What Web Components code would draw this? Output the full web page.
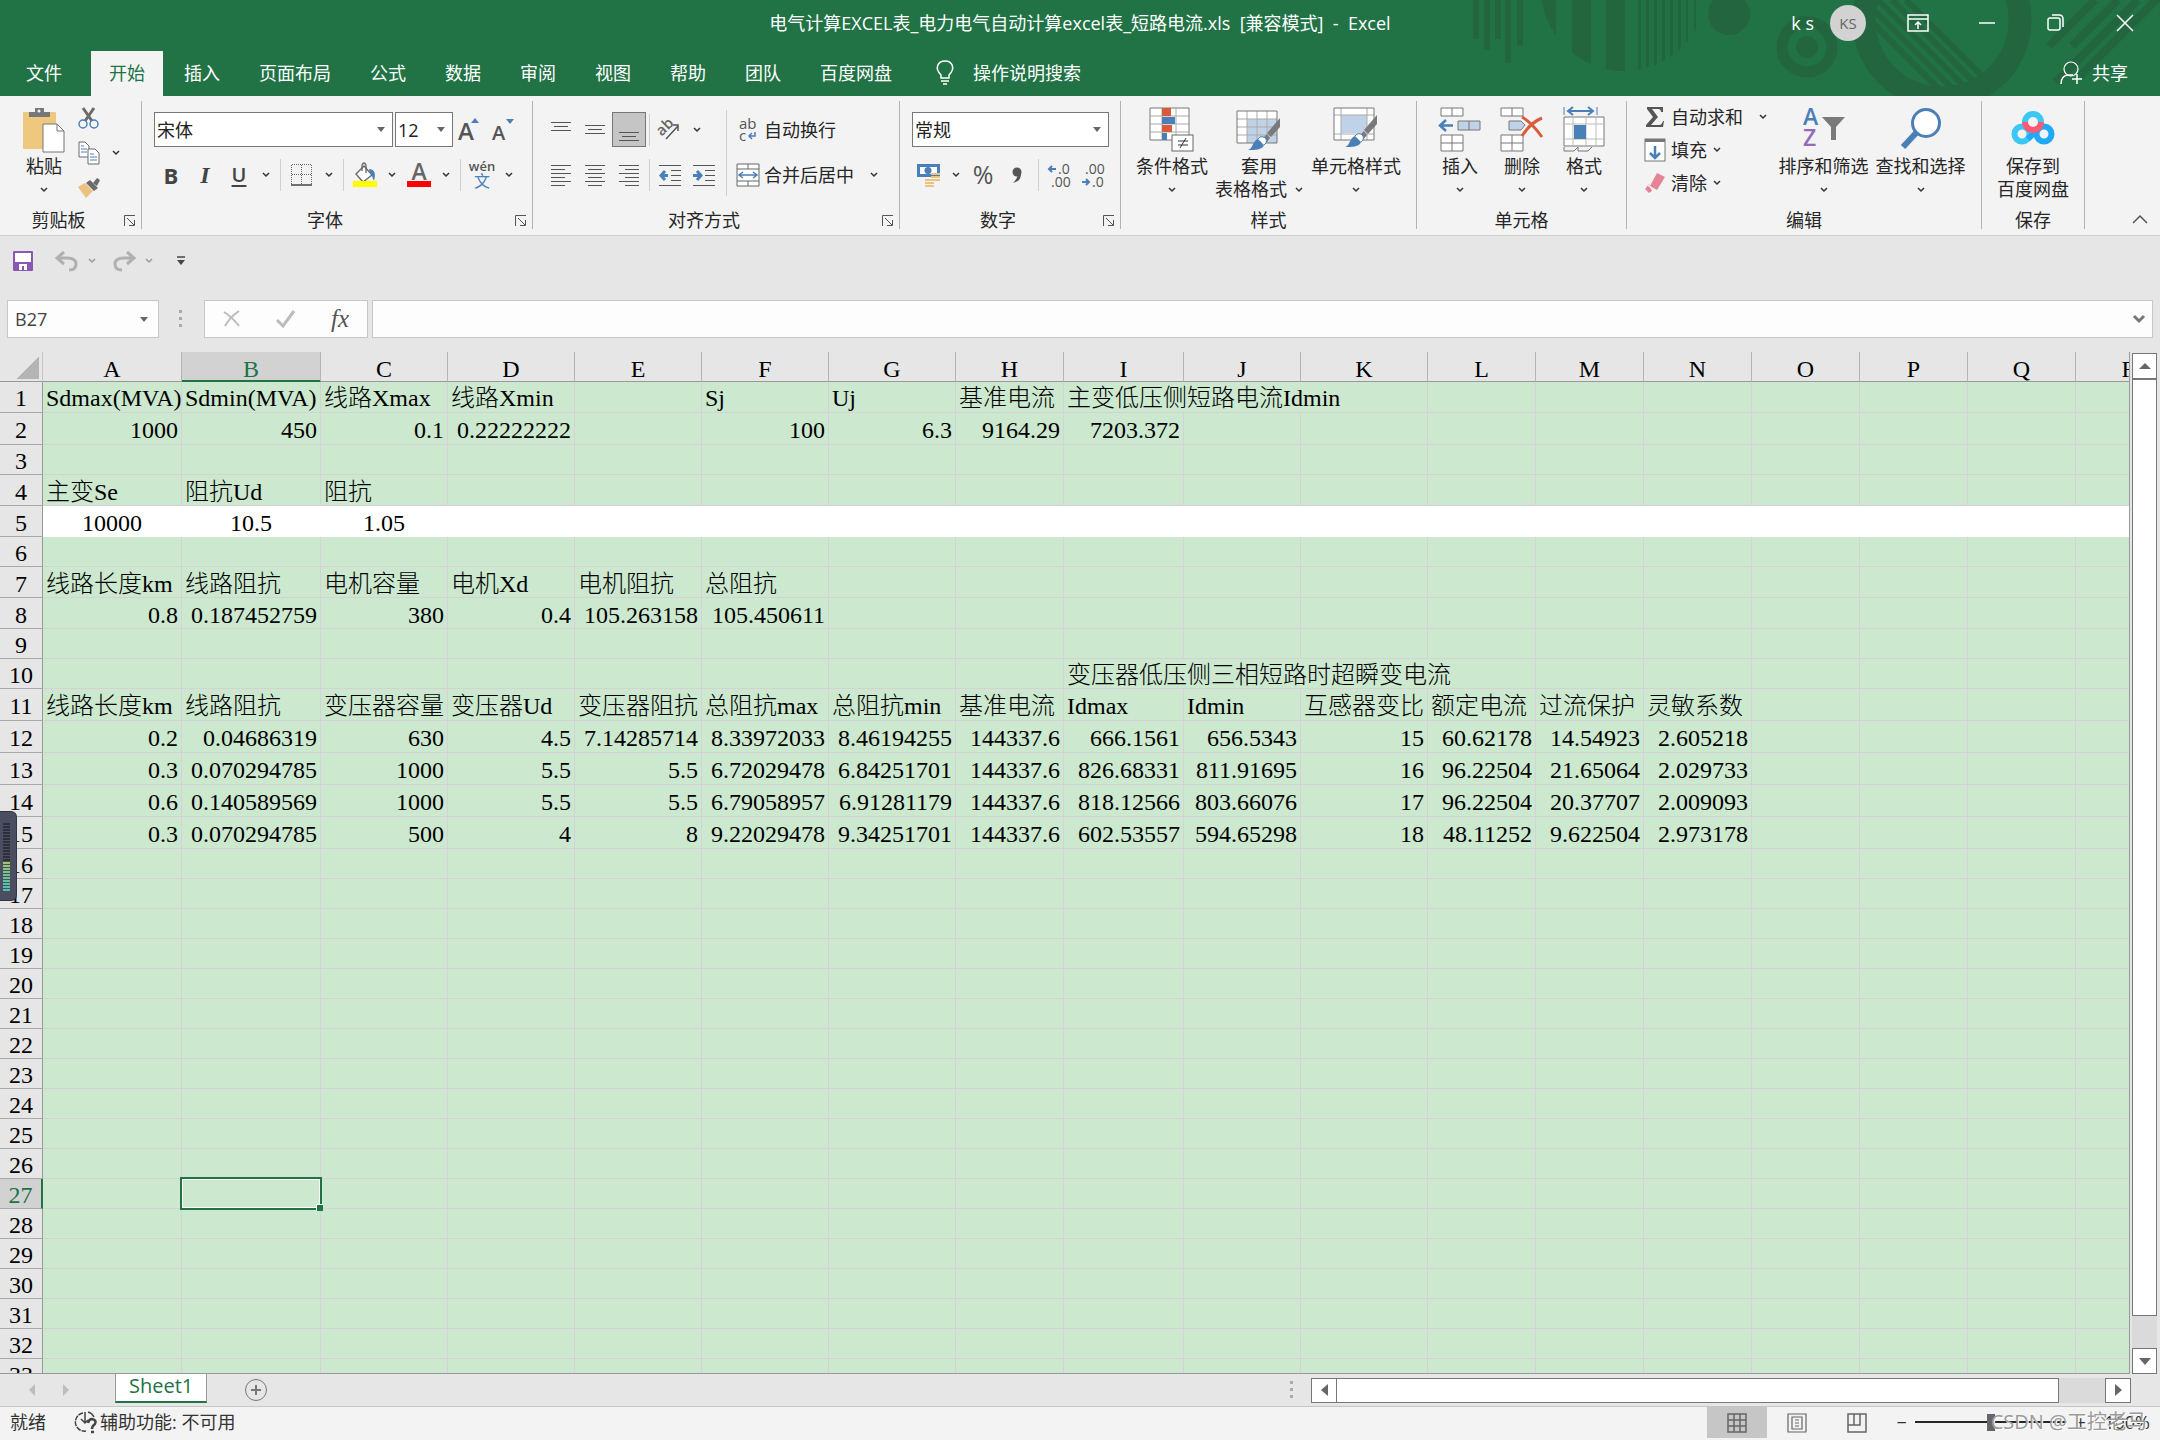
<!DOCTYPE html>
<html lang="zh-CN">
<head>
<meta charset="utf-8">
<title>Excel</title>
<style>
  html, body { height: 100%; margin: 0; }
  body {
    --green: #217346;
    --chrome: #e6e6e6;
    --panel: #f3f3f3;
    --ink: #262626;
    background: var(--chrome);
    color: var(--ink);
    font: 18px/24px "Open Sans", "Noto Sans CJK SC", sans-serif;
    overflow: hidden;
  }
</style>
</head>
<body>
<excel-app></excel-app>

<script>
// Icons: name -> [width, height, svg body]
const BRUSH = `
  <path d="M44 11v9L35 30l-4-4z" fill="#7a7a7a"/><path d="M34 31l-4 5-4-4 5-5z" fill="#7a7a7a"/>
  <path d="M12 43c5-1 5-10 10-11 5 0 7 3 6 6-2 5-9 5-16 5z" fill="#4a7fb8"/>
  <path d="M22 32c2-3 6-3 8 0 1 2 0 5-2 6" fill="#fff" stroke="#4a7fb8"/>`;

const ICONS = {
  chev: [8, 6, '<path d="M1 1l3 3 3-3" fill="none" stroke="#333" stroke-width="1.5"/>'],
  tri: [8, 5, '<path d="M0 0h8L4 5z" fill="#666"/>'],
  launcher: [11, 11, '<path d="M.5 11V.5H11M3 3l7 7M10.500 5v5.500H5" fill="none" stroke="#555"/>'],
  paste: [42, 45, `
    <rect x="0" y="5" width="33" height="37" rx="1" fill="#edc87e"/>
    <path d="M6 10V5h6V1h9v4h6v5z" fill="#777"/><circle cx="16" cy="4" r="1.500" fill="#f3f3f3"/>
    <path d="M20 17h14l7 7v21H20z" fill="#fff" stroke="#777"/><path d="M34 17v7h7" fill="none" stroke="#777"/>`],
  cut: [22, 22, `
    <path d="M5 1l9 13M16 1L7 14" stroke="#6b6b6b" stroke-width="3" fill="none"/>
    <circle cx="5" cy="17" r="4" fill="none" stroke="#4a7fb8" stroke-width="1.500"/>
    <circle cx="16" cy="17" r="4" fill="none" stroke="#4a7fb8" stroke-width="1.500"/>`],
  copy: [22, 24, `
    <path d="M1 1h6l4 4v11H1z" fill="#fff" stroke="#6b6b6b"/><path d="M3 5h3M3 8h6M3 11h6" stroke="#4a7fb8"/>
    <path d="M10 8h7l4 4v11H10z" fill="#fff" stroke="#6b6b6b"/><path d="M12 13h4M12 16h7M12 19h7" stroke="#4a7fb8"/>`],
  painter: [24, 22, `
    <path d="M1 10l7-4 8 8-7 7z" fill="#eac282"/><path d="M9 6l4-3 8 8-4 3z" fill="#6b6b6b"/>
    <path d="M16 6l4-5 3 2-3 6z" fill="#6b6b6b"/>`],
  growFont: [26, 26, '<text x="1" y="23" font-size="24" font-weight="600" fill="#555">A</text><path d="M14 6l4-5 4 5z" fill="#4a7fb8"/>'],
  shrinkFont: [26, 26, '<text x="1" y="23" font-size="20" font-weight="600" fill="#555">A</text><path d="M15 2h8l-4 5z" fill="#4a7fb8"/>'],
  border: [22, 22, `
    <path d="M1 .5h20M1 10.500h20M.5 1v19M10.500 1v19M20.500 1v19" stroke="#666" stroke-dasharray="1 1" fill="none"/>
    <path d="M0 21h21" stroke="#444" stroke-width="1.500"/>`],
  fillColor: [26, 26, `
    <path d="M4 12l8-8 8 9-9 7z" fill="#fff" stroke="#666" stroke-width="1.300"/>
    <path d="M10 9V3q2-4 4 0v8" fill="none" stroke="#666" stroke-width="1.300"/>
    <path d="M17 7c6 0 7 5 5 12-2-4-2-6-4-8z" fill="#4a7fb8"/><rect x="1" y="19" width="24" height="6" fill="#ff0"/>`],
  fontColor: [26, 26, '<text x="13" y="18" font-size="23" font-weight="600" text-anchor="middle" fill="#666">A</text><rect x="1" y="19" width="24" height="6" fill="#f00"/>'],
  pinyin: [26, 28, '<text x="13" y="10" font-size="13" font-weight="600" text-anchor="middle" fill="#555">wén</text><text x="13" y="26" font-size="16" text-anchor="middle" fill="#4a7fb8">文</text>'],
  alignTop: [22, 26, '<path d="M1 5.500h20M4 9.500h14M1 13.500h20" stroke="#555"/>'],
  alignMid: [22, 26, '<path d="M1 8.500h20M4 12.500h14M1 16.500h20" stroke="#555"/>'],
  alignBot: [22, 26, '<path d="M1 15.500h20M4 19.500h14M1 23.500h20" stroke="#555"/>'],
  left: [22, 22, '<path d="M1 1.500h20M1 5.500h14M1 9.500h20M1 13.500h14M1 17.500h20M1 21.500h14" stroke="#555"/>'],
  center: [22, 22, '<path d="M1 1.500h20M4 5.500h14M1 9.500h20M4 13.500h14M1 17.500h20M4 21.500h14" stroke="#555"/>'],
  right: [22, 22, '<path d="M1 1.500h20M7 5.500h14M1 9.500h20M7 13.500h14M1 17.500h20M7 21.500h14" stroke="#555"/>'],
  orient: [24, 22, `
    <text x="1" y="13" font-size="15" font-weight="600" fill="#666" transform="rotate(-45 8 12)">ab</text>
    <path d="M8 20L20 7M15 6h5v6" stroke="#555" stroke-width="1.500" fill="none"/>`],
  outdent: [22, 22, `
    <path d="M0 1.500h22M12 6.500h10M12 11.500h10M12 16.500h10M0 21.500h22" stroke="#555"/>
    <path d="M9 11.500H3M6 7l-4 4.500L6 16" stroke="#4a7fb8" stroke-width="3" fill="none"/>`],
  indent: [22, 22, `
    <path d="M0 1.500h22M12 6.500h10M12 11.500h10M12 16.500h10M0 21.500h22" stroke="#555"/>
    <path d="M0 11.500h7M4 7l4 4.500L4 16" stroke="#4a7fb8" stroke-width="3" fill="none"/>`],
  wrap: [24, 26, '<text x="3" y="12" font-size="15" fill="#555">ab</text><text x="3" y="24" font-size="15" fill="#555">c</text><path d="M19 15v4h-6M16 16l-3 3 3 3" stroke="#4a7fb8" stroke-width="1.500" fill="none"/>'],
  merge: [24, 24, `
    <path d="M1 1h22v22H1zM1 6h22M1 18h22M12 1v5M12 18v5" fill="#fff" stroke="#666"/>
    <path d="M3 12h18M7 9l-4 3 4 3M17 9l4 3-4 3" stroke="#4a7fb8" stroke-width="1.500" fill="none"/>`],
  money: [24, 24, `
    <rect x="0" y="1" width="23" height="13" fill="#4a7fb8"/><rect x="3" y="4" width="17" height="7" fill="#fff"/>
    <circle cx="11" cy="7.500" r="3.500" fill="#4a7fb8"/>
    <path d="M14 11h9M14 14h9M14 17h9M8 17h9M8 20h9M8 23h9" stroke="#eac282" stroke-width="2"/>`],
  percent: [24, 26, '<text x="12" y="22" font-size="25" text-anchor="middle" fill="#555">%</text>'],
  comma: [20, 24, '<circle cx="10" cy="9" r="4.500" fill="#555"/><path d="M14 9q1 9-8 11 5-5 5-10" fill="#555"/>'],
  incDec: [26, 26, '<text x="11" y="12" font-size="14" fill="#555">.0</text><text x="4" y="25" font-size="14" fill="#555">.00</text><path d="M9 7H3M5 4L2 7l3 3" stroke="#4a7fb8" stroke-width="2" fill="none"/>'],
  decDec: [26, 26, '<text x="4" y="12" font-size="14" fill="#555">.00</text><text x="11" y="25" font-size="14" fill="#555">.0</text><path d="M1 20h7M5 17l3 3-3 3" stroke="#4a7fb8" stroke-width="2" fill="none"/>'],
  condFmt: [46, 45, `
    <path d="M1 1h39v32H1z" fill="#fff" stroke="#777"/><path d="M1 9h39M1 17h39M1 25h39M13 1v32M27 1v32" stroke="#aaa"/>
    <rect x="13" y="1" width="9" height="8" fill="#d95b3c"/><rect x="13" y="10" width="13" height="7" fill="#4a7fb8"/>
    <rect x="13" y="18" width="10" height="7" fill="#d95b3c"/><rect x="13" y="26" width="5" height="7" fill="#4a7fb8"/>
    <rect x="23" y="28" width="21" height="16" fill="#fff" stroke="#666"/><path d="M29 34h10M29 38h10M37 31l-6 10" stroke="#333" fill="none"/>`],
  tableFmt: [46, 45, `
    <path d="M1 4h40v32H1z" fill="#fff"/><path d="M11 12h30v24H11z" fill="#c0d2e8"/>
    <path d="M1 12h40M1 20h40M1 28h40M11 4v32M21 4v32M31 4v32" stroke="#aaa"/><path d="M1 4h40v32H1z" fill="none" stroke="#777"/>${BRUSH}`],
  cellFmt: [46, 45, `
    <path d="M1 1h40v32H1z" fill="#fff"/><path d="M8 8h26v18H8z" fill="#c0d2e8"/>
    <path d="M1 8h40M1 27h40M8 1v32M34 1v32" stroke="#aaa"/><path d="M1 1h40v32H1z" fill="none" stroke="#777"/>
    <g transform="translate(0 -3)">${BRUSH}</g>`],
  insert: [44, 45, `
    <path d="M3 1h22v8H3zM14 1v8M3 28h22v16H3zM3 36h22M14 28v16" fill="#fff" stroke="#777"/>
    <path d="M20 14h22v9H20zM31 14v9" fill="#c0d2e8" stroke="#777"/>
    <path d="M15 18.500H2M8 13l-6 5.500L8 24" stroke="#4a7fb8" stroke-width="2.500" fill="none"/>`],
  remove: [44, 45, `
    <path d="M1 1h22v8H1zM12 1v8M1 28h22v16H1zM1 36h22M12 28v16" fill="#fff" stroke="#777"/>
    <path d="M9 14h12l4 4-4 5H9z" fill="#c0d2e8" stroke="#777"/>
    <path d="M22 10q10 6 20 20M42 11q-12 5-20 18" stroke="#d95b3c" stroke-width="3" fill="none"/>`],
  format: [42, 45, `
    <path d="M1 0v8M34 0v8" stroke="#4a7fb8"/><path d="M5 4h25M10 0L5 4l5 4M25 0l5 4-5 4" stroke="#4a7fb8" stroke-width="2" fill="none"/>
    <path d="M1 10h40v29H1z" fill="#fff" stroke="#777"/><path d="M1 17h40M1 32h40M10 10v29M23 10v29M33 10v29" stroke="#bbb"/>
    <rect x="11" y="18" width="12" height="14" fill="#4a7fb8"/>
    <path d="M1 40v4h10l4-4M15 40v4h10l4-4" fill="none" stroke="#777"/>`],
  sum: [20, 22, '<path d="M2 1h16v5h-2q0-3-3-3H7l6 8-7 8h8q3 0 4-4h1l-1 6H1v-2l7-8-6-8z" fill="#555"/>'],
  fillDown: [22, 24, '<rect x="1" y="1" width="20" height="22" fill="#fff" stroke="#777"/><rect x="1" y="1" width="20" height="3" fill="#777"/><path d="M11 8v12M6 15l5 5 5-5" stroke="#4a7fb8" stroke-width="2.500" fill="none"/>'],
  eraser: [22, 22, '<path d="M13 1l8 4-8 13-7-4z" fill="#e68397"/><path d="M5 12l3 7-3 2-4-4z" fill="#e68397"/><path d="M4 13l7 6" stroke="#f3f3f3" stroke-width="1.500"/>'],
  sort: [44, 45, `
    <text x="1" y="18" font-size="23" font-weight="600" fill="#4a7fb8">A</text><text x="1" y="39" font-size="23" font-weight="600" fill="#9668b8">Z</text>
    <path d="M20 10h23l-9 10v13h-5V20z" fill="#7a7a7a"/>`],
  find: [44, 45, '<circle cx="27" cy="16" r="13.500" fill="#fff" stroke="#4a7fb8" stroke-width="3"/><path d="M18 25L4 40" stroke="#4a7fb8" stroke-width="6"/>'],
  netdisk: [44, 45, `
    <g fill="none" stroke-width="6"><path d="M14 15a8 8 0 0 1 16 0" stroke="#3cc8f5"/>
    <circle cx="11" cy="27" r="7.500" stroke="#3cc8f5"/><circle cx="33" cy="27" r="7.500" stroke="#1fa9f7"/>
    <path d="M17 32l10-10" stroke="#1fa9f7"/><path d="M14 15a8 8 0 0 0 16 0" stroke="#fb5a75"/></g>`],
  collapse: [16, 10, '<path d="M1 9l7-7 7 7" fill="none" stroke="#555" stroke-width="1.500"/>'],
  save: [20, 20, '<rect width="20" height="20" rx="1" fill="#8a58b0"/><rect x="2" y="2" width="16" height="9" fill="#fff"/><path d="M6 19v-6h8v6h-3v-4H9v4z" fill="#fff"/>'],
  undo: [24, 22, '<path d="M9 2L2 8l7 6M3 8h9q9 0 9 6t-7 6" fill="none" stroke="#b0b0b0" stroke-width="3"/>'],
  redo: [24, 22, '<path d="M15 2l7 6-7 6M21 8h-9q-9 0-9 6t7 6" fill="none" stroke="#b0b0b0" stroke-width="3"/>'],
  custom: [8, 9, '<path d="M0 1h8" stroke="#444" stroke-width="1.500"/><path d="M0 4h8L4 9z" fill="#444"/>'],
  dots: [4, 18, '<path d="M0 1.500h3M0 8.500h3M0 15.500h3" stroke="#aaa" stroke-width="3"/>'],
  cancel: [20, 20, '<path d="M2 3q8 5 15 14M17 2Q8 8 3 17" stroke="#bbb" stroke-width="2" fill="none"/>'],
  check: [20, 20, '<path d="M1 11l6 6L18 2" stroke="#bbb" stroke-width="3" fill="none"/>'],
  expand: [12, 10, '<path d="M1 2l5 5 5-5" stroke="#777" stroke-width="3" fill="none"/>'],
  bulb: [20, 26, '<path d="M6 18v-3C-1 8 3 1 10 1s11 7 4 14v3zM6 21h8M8 24h4" fill="none" stroke="#fff" stroke-width="1.500"/>'],
  share: [24, 24, '<circle cx="11" cy="8" r="7" fill="none" stroke="#fff" stroke-width="1.200"/><path d="M1 23q0-8 7-9h5M17 13v10M12 18h10" fill="none" stroke="#fff" stroke-width="1.500"/>'],
  display: [22, 18, '<path d="M1 1h20v16H1zM1 5h20M11 15V8M8 11l3-3 3 3" fill="none" stroke="#fff" stroke-width="1.500"/>'],
  min: [16, 16, '<path d="M0 8h16" stroke="#fff" stroke-width="1.500"/>'],
  restore: [18, 18, '<rect x="1" y="4" width="12" height="12" rx="2" fill="none" stroke="#fff" stroke-width="1.500"/><path d="M5 1h7q4 0 4 4v8" fill="none" stroke="#fff" stroke-width="1.500"/>'],
  close: [18, 18, '<path d="M1 1l16 16M17 1L1 17" stroke="#fff" stroke-width="1.500"/>'],
  plus: [24, 24, '<circle cx="12" cy="12" r="10.500" fill="none" stroke="#777"/><path d="M7 12h10M12 7v10" stroke="#777" stroke-width="2"/>'],
  prev: [6, 12, '<path d="M6 0v12L0 6z" fill="#bdbdbd"/>'],
  next: [6, 12, '<path d="M0 0v12l6-6z" fill="#bdbdbd"/>'],
  up: [12, 6, '<path d="M0 6h12L6 0z" fill="#666"/>'],
  down: [12, 7, '<path d="M0 0h12L6 7z" fill="#666"/>'],
  toLeft: [7, 12, '<path d="M7 0v12L0 6z" fill="#666"/>'],
  toRight: [7, 12, '<path d="M0 0v12l7-6z" fill="#666"/>'],
  access: [22, 24, '<path d="M7 3a9 9 0 0 0 3 18" fill="none" stroke="#444" stroke-width="1.500" stroke-dasharray="5 1"/><path d="M9 2v10M5 9l4 4 3-3M12 2q4 1 6 5" fill="none" stroke="#444" stroke-width="1.500"/><path d="M12 13q1-4 4-4 5 1 3 5-3 2-3 5M15 22h3" fill="none" stroke="#444" stroke-width="2.500"/>'],
  viewGrid: [20, 20, '<path d="M1 1h18v18H1zM1 7h18M1 13h18M7 1v18M13 1v18" fill="none" stroke="#666" stroke-width="1.500"/>'],
  viewPage: [20, 20, '<path d="M1 1h18v18H1zM5 4h10v12H5zM8 7h4M8 10h4M8 13h4" fill="none" stroke="#666" stroke-width="1.200"/>'],
  viewBreak: [20, 20, '<path d="M1 1h18v18H1zM1 12h12V1M7 1v11" fill="none" stroke="#666" stroke-width="1.500"/>']
};

class XlIcon extends HTMLElement {
  connectedCallback() {
    const [w, h, body] = ICONS[this.getAttribute('name')];
    this.attachShadow({ mode: 'open' }).innerHTML = `
      <style>:host { display: inline-flex; flex: none; } svg { display: block; overflow: visible; }</style>
      <svg width="${w}" height="${h}" viewBox="0 0 ${w} ${h}" aria-hidden="true">${body}</svg>`;
  }
}
customElements.define('xl-icon', XlIcon);

const icon = (name) => `<xl-icon name="${name}"></xl-icon>`;

// Small tool: icon, or icon + text, with an optional drop arrow
class ToolButton extends HTMLElement {
  connectedCallback() {
    const name = this.getAttribute('icon');
    const label = this.getAttribute('label') || '';
    this.attachShadow({ mode: 'open' }).innerHTML = `
      <style>
        :host { display: flex; align-items: center; height: 35px; }
        button { all: unset; box-sizing: border-box; display: flex; align-items: center; justify-content: center;
          width: 34px; height: 35px; }
        .pic { display: flex; justify-content: center; }
        :host([wide]) button { width: auto; gap: 4px; justify-content: flex-start; white-space: nowrap; }
        :host([wide]) .pic { width: 24px; }
        :host([on]) button { background: #c5c5c5; border: 1px solid #777; }
        .drop { width: 20px !important; justify-content: center !important; }
        :host([far]) .drop { margin-left: 10px; }
      </style>
      <button aria-label="${this.title || label || name}"><span class="pic">${name ? icon(name) : '<slot></slot>'}</span>${label}</button>
      ${this.hasAttribute('drop') ? `<button class="drop" aria-label="more">${icon('chev')}</button>` : ''}`;
  }
}
customElements.define('tool-button', ToolButton);

// Large tool: picture above one or two lines of text
class BigButton extends HTMLElement {
  connectedCallback() {
    const two = this.getAttribute('second');
    const drop = this.hasAttribute('drop') ? icon('chev') : '';
    this.attachShadow({ mode: 'open' }).innerHTML = `
      <style>
        :host { display: block; padding-top: 11px; }
        button { all: unset; display: flex; flex-direction: column; align-items: center; width: 100%; line-height: 23px; white-space: nowrap; }
        .pic { display: flex; height: 45px; margin-bottom: 3px; }
        .row { display: flex; align-items: center; gap: 8px; height: 23px; }
      </style>
      <button><span class="pic">${icon(this.getAttribute('icon'))}</span>
        <span>${this.getAttribute('label')}</span>
        <span class="row">${two ? `<span>${two}</span>` : ''}${drop}</span></button>`;
  }
}
customElements.define('big-button', BigButton);

class ComboBox extends HTMLElement {
  connectedCallback() {
    this.attachShadow({ mode: 'open' }).innerHTML = `
      <style>
        :host { display: grid; align-items: center; box-sizing: border-box; height: 35px; background: #fff; border: 1px solid #777; }
        select { grid-area: 1 / 1; appearance: none; border: 0; margin: 0; padding: 0 2px; background: none; color: #222; font: inherit; width: 100%; height: 33px; }
        xl-icon { grid-area: 1 / 1; justify-self: end; margin-right: 7px; pointer-events: none; }
      </style>
      <select aria-label="${this.getAttribute('label')}"><option>${this.getAttribute('value')}</option></select>${icon('tri')}`;
  }
}
customElements.define('combo-box', ComboBox);

class RibbonGroup extends HTMLElement {
  connectedCallback() {
    this.attachShadow({ mode: 'open' }).innerHTML = `
      <style>
        :host { display: flex; flex: none; height: 139px; }
        .main { flex: 1; display: flex; flex-direction: column; min-width: 0; }
        .body { flex: 1; display: flex; align-items: flex-start; min-height: 0; }
        footer { display: flex; align-items: center; height: 29px; padding-bottom: 1px; }
        footer span { flex: 1; text-align: center; }
        button { all: unset; display: flex; width: 24px; justify-content: center; padding-top: 2px; }
        .rule { width: 1px; margin: 5px 0 6px; background: #b4b4b4; }
      </style>
      <div class="main"><div class="body"><slot></slot></div>
        <footer><span>${this.getAttribute('label')}</span>${this.hasAttribute('launcher') ? `<button aria-label="dialog">${icon('launcher')}</button>` : ''}</footer>
      </div><div class="rule"></div>`;
  }
}
customElements.define('ribbon-group', RibbonGroup);

class TitleBar extends HTMLElement {
  connectedCallback() {
    const tabs = ['文件', '开始', '插入', '页面布局', '公式', '数据', '审阅', '视图', '帮助', '团队', '百度网盘'];
    this.attachShadow({ mode: 'open' }).innerHTML = `
      <style>
        :host { display: grid; background: var(--green); color: #fff; height: 96px; overflow: hidden; }
        button { all: unset; }
        .art { grid-area: 1 / 1; justify-self: end; }
        .content { grid-area: 1 / 1; display: flex; flex-direction: column; justify-content: space-between; }
        .top { display: grid; grid-template-columns: 1fr auto 1fr; align-items: center; height: 46px; }
        .name { white-space: pre; }
        .user { display: flex; align-items: center; justify-content: flex-end; grid-column: 3; }
        .avatar { display: grid; place-items: center; width: 36px; height: 36px; margin: 0 17px 0 16px; border-radius: 50%; background: #d2d2d2; color: #666; font-size: 15px; }
        .win { display: flex; justify-content: center; width: 69px; }
        .win:last-child { width: 70px; }
        nav { display: flex; align-items: stretch; height: 45px; gap: 3px; }
        .tab, .ask, .share { display: flex; align-items: center; padding: 0 18px 2px; }
        .tab:first-child { padding-left: 26px; padding-right: 26px; }
        .tab.on { background: var(--panel); color: var(--green); }
        .ask { gap: 18px; }
        .ask { margin-left: 4px; }
        .share { gap: 8px; margin-left: auto; padding-right: 32px; }
      </style>
      <svg class="art" width="720" height="96" viewBox="0 0 720 96" fill="#22653f" aria-hidden="true">
        <defs>
          <clipPath id="disc"><circle cx="184" cy="-12" r="83"/></clipPath>
          <clipPath id="hole"><circle cx="502" cy="20" r="67"/></clipPath>
        </defs>
        <path d="M33 0h6v39h-6zM44 0h6v50h-6zM55 0h6v39h-6zM65 0h6v63h-6zM77 0h6v46h-6z"/>
        <path clip-path="url(#disc)" d="M100 0h16v96h-16zM132 0h19v96h-19zM166 0h19v96h-19zM198 0h3v96h-3zM206 0h3v96h-3zM214 0h3v96h-3zM222 0h3v96h-3zM230 0h3v96h-3zM238 0h3v96h-3zM246 0h2v96h-2zM254 0h2v96h-2z"/>
        <circle cx="289" cy="14" r="21"/>
        <g fill="none" stroke="#22653f">
          <circle cx="367" cy="47" r="25" stroke-width="11"/>
          <circle cx="502" cy="20" r="78" stroke-width="23"/>
          <path clip-path="url(#hole)" stroke-width="6" d="M410 0l90 90M424 0l90 90M438 0l90 90M452 0l90 90M466 0l90 90"/>
          <path stroke-width="8" d="M609 46l46-46M632 46l46-46M616 82l82-82M640 76l80-80"/>
        </g>
        <circle cx="367" cy="47" r="11"/>
      </svg>
      <div class="content">
        <div class="top">
          <span></span>
          <span class="name">电气计算EXCEL表_电力电气自动计算excel表_短路电流.xls  [兼容模式]  -  Excel</span>
          <div class="user"><span>k s</span><span class="avatar">KS</span>
            ${['display', 'min', 'restore', 'close'].map(n => `<button class="win" aria-label="${n}">${icon(n)}</button>`).join('')}
          </div>
        </div>
        <nav>
          ${tabs.map(t => `<button class="tab${t === '开始' ? ' on' : ''}">${t}</button>`).join('')}
          <button class="ask">${icon('bulb')}<span>操作说明搜索</span></button>
          <button class="share">${icon('share')}<span>共享</span></button>
        </nav>
      </div>`;
  }
}
customElements.define('title-bar', TitleBar);

class RibbonBar extends HTMLElement {
  connectedCallback() {
    this.attachShadow({ mode: 'open' }).innerHTML = `
      <style>
        :host { display: flex; background: var(--panel); border-bottom: 1px solid #d0d0d0; }
        .stack { display: flex; flex-direction: column; gap: 10px; padding-top: 16px; }
        .tight { gap: 0; padding-top: 4px; }
        .line { display: flex; align-items: center; }
        .sep { width: 1px; height: 32px; margin: 0 4px; background: #d0d0d0; }
        .tall { width: 1px; height: 86px; margin: 14px 9px 0 5px; background: #d0d0d0; }
        .near .sep { margin: 0 3px; }
        b, i, u { font-size: 22px; color: #444; }
        i { font-family: "Liberation Serif", serif; font-weight: bold; font-size: 24px; }
        u { font-weight: 600; text-underline-offset: 3px; text-decoration-thickness: 2px; font-size: 20px; }
        .edit { width: 132px; padding-top: 4px; gap: 0; }
        .edit tool-button { height: 33px; }
        .fold { all: unset; margin: auto 12px 6px auto; }
      </style>
      <ribbon-group label="剪贴板" launcher style="width:142px">
        <big-button icon="paste" label="粘贴" drop style="width:56px;margin-left:16px"></big-button>
        <div class="stack tight">
          <tool-button icon="cut"></tool-button>
          <tool-button icon="copy" drop></tool-button>
          <tool-button icon="painter"></tool-button>
        </div>
      </ribbon-group>
      <ribbon-group label="字体" launcher style="width:391px">
        <div class="stack" style="margin-left:12px">
          <div class="line">
            <combo-box label="字体" value="宋体" style="width:239px;margin-right:2px"></combo-box>
            <combo-box label="字号" value="12" style="width:58px"></combo-box>
            <tool-button icon="growFont"></tool-button><tool-button icon="shrinkFont"></tool-button>
          </div>
          <div class="line">
            <tool-button title="加粗"><b>B</b></tool-button><tool-button title="倾斜"><i>I</i></tool-button>
            <tool-button title="下划线" drop><u>U</u></tool-button><span class="sep"></span>
            <tool-button icon="border" drop></tool-button><span class="sep"></span>
            <tool-button icon="fillColor" drop></tool-button>
            <tool-button icon="fontColor" drop></tool-button><span class="sep"></span>
            <tool-button icon="pinyin" drop></tool-button>
          </div>
        </div>
      </ribbon-group>
      <ribbon-group label="对齐方式" launcher style="width:367px">
        <div class="stack near" style="margin-left:11px">
          <div class="line">
            <tool-button icon="alignTop"></tool-button><tool-button icon="alignMid"></tool-button>
            <tool-button icon="alignBot" on></tool-button><span class="sep"></span>
            <tool-button icon="orient" drop></tool-button>
          </div>
          <div class="line">
            <tool-button icon="left"></tool-button><tool-button icon="center"></tool-button>
            <tool-button icon="right"></tool-button><span class="sep"></span>
            <tool-button icon="outdent"></tool-button><tool-button icon="indent"></tool-button>
          </div>
        </div>
        <span class="tall"></span>
        <div class="stack">
          <tool-button icon="wrap" label="自动换行" wide></tool-button>
          <tool-button icon="merge" label="合并后居中" wide far drop></tool-button>
        </div>
      </ribbon-group>
      <ribbon-group label="数字" launcher style="width:221px">
        <div class="stack" style="margin-left:12px">
          <combo-box label="数字格式" value="常规" style="width:197px"></combo-box>
          <div class="line">
            <tool-button icon="money" drop></tool-button><tool-button icon="percent"></tool-button>
            <tool-button icon="comma"></tool-button><span class="sep"></span>
            <tool-button icon="incDec"></tool-button><tool-button icon="decDec"></tool-button>
          </div>
        </div>
      </ribbon-group>
      <ribbon-group label="样式" style="width:296px">
        <big-button icon="condFmt" label="条件格式" drop style="width:84px;margin-left:9px"></big-button>
        <big-button icon="tableFmt" label="套用" second="表格格式" drop style="width:90px"></big-button>
        <big-button icon="cellFmt" label="单元格样式" drop style="width:104px"></big-button>
      </ribbon-group>
      <ribbon-group label="单元格" style="width:210px">
        <big-button icon="insert" label="插入" drop style="width:62px;margin-left:12px"></big-button>
        <big-button icon="remove" label="删除" drop style="width:62px"></big-button>
        <big-button icon="format" label="格式" drop style="width:62px"></big-button>
      </ribbon-group>
      <ribbon-group label="编辑" style="width:355px">
        <div class="stack edit" style="margin-left:16px">
          <tool-button icon="sum" label="自动求和" wide far drop></tool-button>
          <tool-button icon="fillDown" label="填充" wide drop></tool-button>
          <tool-button icon="eraser" label="清除" wide drop></tool-button>
        </div>
        <big-button icon="sort" label="排序和筛选" drop style="width:97px"></big-button>
        <big-button icon="find" label="查找和选择" drop style="width:97px"></big-button>
      </ribbon-group>
      <ribbon-group label="保存" style="width:103px">
        <big-button icon="netdisk" label="保存到" second="百度网盘" style="width:102px"></big-button>
      </ribbon-group>
      <button class="fold" aria-label="collapse">${icon('collapse')}</button>`;
  }
}
customElements.define('ribbon-bar', RibbonBar);

class QuickBar extends HTMLElement {
  connectedCallback() {
    this.attachShadow({ mode: 'open' }).innerHTML = `
      <style>
        :host { display: flex; align-items: center; box-sizing: border-box; height: 50px; padding: 0 0 1px 13px; }
        button { all: unset; display: flex; }
        .a { margin-left: 22px; } .b { margin-left: 9px; } .c { margin-left: 16px; } .d { margin-left: 24px; }
        .dim { opacity: .4; }
      </style>
      <button aria-label="保存">${icon('save')}</button>
      <button class="a" aria-label="撤消">${icon('undo')}</button><button class="b dim" aria-label="more">${icon('chev')}</button>
      <button class="c" aria-label="恢复">${icon('redo')}</button><button class="b dim" aria-label="more">${icon('chev')}</button>
      <button class="d" aria-label="自定义">${icon('custom')}</button>`;
  }
}
customElements.define('quick-bar', QuickBar);

class FormulaBar extends HTMLElement {
  connectedCallback() {
    this.attachShadow({ mode: 'open' }).innerHTML = `
      <style>
        :host { display: flex; align-items: center; padding: 14px 7px; height: 38px; }
        .box { display: flex; align-items: center; box-sizing: border-box; height: 38px; background: #fdfdfd; border: 1px solid #c6c6c6; }
        input { border: 0; padding: 0 7px; min-width: 0; flex: 1; background: none; outline: 0; font: inherit; color: #444; }
        button { all: unset; display: flex; justify-content: center; width: 54px; }
        .name { width: 152px; } .name xl-icon { margin-right: 10px; }
        .dots { display: flex; margin: 0 21px 0 20px; }
        .acts { width: 164px; margin-right: 4px; }
        .fx { font: italic 25px/30px "Liberation Serif", serif; color: #555; }
        .long { flex: 1; } .long button { width: 26px; }
      </style>
      <div class="box name"><input aria-label="名称框" value="B27">${icon('tri')}</div>
      <span class="dots">${icon('dots')}</span>
      <div class="box acts"><button aria-label="取消">${icon('cancel')}</button><button aria-label="输入">${icon('check')}</button><button class="fx">fx</button></div>
      <div class="box long"><input aria-label="编辑栏"><button aria-label="expand">${icon('expand')}</button></div>`;
  }
}
customElements.define('formula-bar', FormulaBar);

const COLS = { A: 139, B: 139, C: 127, D: 127, E: 127, F: 127, G: 127, H: 108, I: 120, J: 117, K: 127,
  L: 108, M: 108, N: 108, O: 108, P: 108, Q: 108, R: 108 };
const HEIGHTS = [31, 32, 30, 31, 31, 30, 31, 31, 30, 30, 32, 32, 32, 32, 32];
const SPANS = { I1: 3, I10: 4 };
const ROWS = {
  1: ['Sdmax(MVA)', 'Sdmin(MVA)', '线路Xmax', '线路Xmin', '', 'Sj', 'Uj', '基准电流', '主变低压侧短路电流Idmin'],
  2: [1000, 450, 0.1, '0.22222222', '', 100, 6.3, 9164.29, 7203.372],
  4: ['主变Se', '阻抗Ud', '阻抗'],
  5: [10000, 10.5, 1.05],
  7: ['线路长度km', '线路阻抗', '电机容量', '电机Xd', '电机阻抗', '总阻抗'],
  8: [0.8, 0.187452759, 380, 0.4, 105.263158, 105.450611],
  10: ['', '', '', '', '', '', '', '', '变压器低压侧三相短路时超瞬变电流'],
  11: ['线路长度km', '线路阻抗', '变压器容量', '变压器Ud', '变压器阻抗', '总阻抗max', '总阻抗min', '基准电流', 'Idmax', 'Idmin', '互感器变比', '额定电流', '过流保护', '灵敏系数'],
  12: [0.2, 0.04686319, 630, 4.5, 7.14285714, 8.33972033, 8.46194255, 144337.6, 666.1561, 656.5343, 15, 60.62178, 14.54923, 2.605218],
  13: [0.3, 0.070294785, 1000, 5.5, 5.5, 6.72029478, 6.84251701, 144337.6, 826.68331, 811.91695, 16, 96.22504, 21.65064, 2.029733],
  14: [0.6, 0.140589569, 1000, 5.5, 5.5, 6.79058957, 6.91281179, 144337.6, 818.12566, 803.66076, 17, 96.22504, 20.37707, 2.009093],
  15: [0.3, 0.070294785, 500, 4, 8, 9.22029478, 9.34251701, 144337.6, 602.53557, 594.65298, 18, 48.11252, 9.622504, 2.973178]
};

class SheetGrid extends HTMLElement {
  connectedCallback() {
    const letters = Object.keys(COLS);
    const total = Object.values(COLS).reduce((a, b) => a + b, 43);
    let rows = '';
    for (let r = 1; r <= 33; r++) {
      const data = ROWS[r] || [];
      const height = HEIGHTS[r - 1] || 30;
      let cells = '';
      for (let c = 0; c < letters.length; c++) {
        const id = letters[c] + r;
        const v = data[c] === undefined ? '' : data[c];
        const span = SPANS[id] || 1;
        const num = v !== '' && !isNaN(v);
        cells += `<td${num ? ' class="n"' : ''}${id === 'B27' ? ' id="sel"' : ''}${span > 1 ? ` colspan="${span}"` : ''}>${v}</td>`;
        c += span - 1;
      }
      const kind = { 5: 'plain', 27: 'cur' }[r] || (r === 1 || height === 32 ? 'roomy' : '');
      rows += `<tr class="${kind}" style="height:${height}px"><th scope="row">${r}</th>${cells}</tr>`;
    }
    this.attachShadow({ mode: 'open' }).innerHTML = `
      <style>
        :host { display: block; overflow: hidden; border: solid #999; border-width: 0 1px 1px 0; }
        table { table-layout: fixed; width: ${total}px; border-collapse: separate; border-spacing: 0;
          font: 300 24px/24px "Liberation Serif", "Noto Sans CJK SC", serif; color: #000; }
        th, td { box-sizing: border-box; padding: 0 3px 1px; vertical-align: bottom; white-space: nowrap; }
        .roomy th, .roomy td { padding-bottom: 2px; }
        th { background: var(--chrome); font-weight: 300; padding-left: 0; padding-right: 0; text-align: center;
          border-right: 1px solid #999; border-bottom: 1px solid #a8a8a8; }
        thead th { border-right-color: #b4b4b4; border-bottom-color: #999; padding-bottom: 0; }
        thead tr { height: 30px; }
        thead th:first-child { background: linear-gradient(135deg, transparent 50%, #b4b4b4 50%) no-repeat 17px 5px / 22px 22px; border-right-color: #c4c4c4; }
        thead th.cur { background: #d2d2d2; color: var(--green); border-bottom-color: var(--green); box-shadow: inset 0 -1px var(--green); }
        tr.cur th { background: #d2d2d2; color: var(--green); border-right: 2px solid var(--green); }
        td { background: #cce8cf; border-right: 1px solid #d5d1d6; border-bottom: 1px solid #d5d1d6; text-align: left; }
        .n { text-align: right; }
        .plain td { background: #fff; border-color: #fff; text-align: center; }
        #sel { position: relative; }
        #sel::before { content: ""; position: absolute; inset: -2px; border: 2px solid var(--green); box-shadow: inset 0 0 0 1px #fff; z-index: 1; }
        #sel::after { content: ""; position: absolute; right: -3px; bottom: -3px; width: 6px; height: 6px; background: var(--green); border: solid #fff; border-width: 1px 0 0 1px; z-index: 2; }
      </style>
      <table>
        <colgroup><col style="width:43px">${letters.map(l => `<col style="width:${COLS[l]}px">`).join('')}</colgroup>
        <thead><tr><th></th>${letters.map(l => `<th scope="col"${l === 'B' ? ' class="cur"' : ''}>${l}</th>`).join('')}</tr></thead>
        <tbody>${rows}</tbody>
      </table>`;
  }
}
customElements.define('sheet-grid', SheetGrid);

class ScrollStrip extends HTMLElement {
  connectedCallback() {
    const [a, b] = this.hasAttribute('vertical') ? ['up', 'down'] : ['toLeft', 'toRight'];
    this.attachShadow({ mode: 'open' }).innerHTML = `
      <style>
        :host { display: flex; background: #dadada; height: 25px; }
        :host([vertical]) { flex-direction: column; width: 25px; height: auto; }
        button, .thumb { all: unset; box-sizing: border-box; background: #fff; border: 1px solid #777; display: grid; place-items: center; }
        button { width: 26px; height: 26px; flex: none; }
        :host(:not([vertical])) button { height: 25px; }
        :host([vertical]) button { width: 25px; }
        .thumb { flex: 1; }
        :host(:not([vertical])) .thumb { margin: 0 46px 0 -1px; }
        :host([vertical]) .thumb { margin-bottom: 32px; }
      </style>
      <button aria-label="${a}">${icon(a)}</button><div class="thumb"></div><button aria-label="${b}">${icon(b)}</button>`;
  }
}
customElements.define('scroll-strip', ScrollStrip);

class SheetTabs extends HTMLElement {
  connectedCallback() {
    this.attachShadow({ mode: 'open' }).innerHTML = `
      <style>
        :host { display: flex; align-items: center; height: 32px; padding-left: 29px; border-bottom: 1px solid #c6c6c6; }
        button { all: unset; display: flex; }
        .tab { box-sizing: border-box; height: 30px; align-self: flex-start; margin: -1px 37px 0 46px; padding: 0 13px 2px; align-items: center;
          background: #fff; color: var(--green); font-size: 20px; border: solid #999; border-width: 0 1px; border-bottom: 2px solid var(--green); }
        .next { margin-left: 28px; }
        .dots { display: flex; margin-left: auto; margin-right: 17px; }
        scroll-strip { flex: 0 1 820px; margin-right: 29px; }
      </style>
      <button aria-label="prev">${icon('prev')}</button><button class="next" aria-label="next">${icon('next')}</button>
      <button class="tab">Sheet1</button><button aria-label="新工作表">${icon('plus')}</button>
      <span class="dots">${icon('dots')}</span><scroll-strip></scroll-strip>`;
  }
}
customElements.define('sheet-tabs', SheetTabs);

class StatusBar extends HTMLElement {
  connectedCallback() {
    this.attachShadow({ mode: 'open' }).innerHTML = `
      <style>
        :host { display: flex; align-items: center; box-sizing: border-box; height: 33px; padding: 0 10px 3px; background: var(--panel); color: #333; position: relative; }
        button { all: unset; display: grid; place-items: center; width: 60px; height: 31px; align-self: flex-start; }
        .on { background: #c6c6c6; }
        .acc { display: flex; margin: 0 2px 0 30px; }
        .views { display: flex; align-self: stretch; margin-left: auto; }
        .zoom { display: flex; align-items: center; gap: 8px; margin-left: 9px; }
        input { appearance: none; width: 152px; height: 17px; margin: 0; background: linear-gradient(#262626, #262626) no-repeat center / 100% 2px; }
        input::-webkit-slider-thumb { appearance: none; width: 8px; height: 17px; background: #666; }
        .step { width: 11px; }
        .pct { margin-left: 18px; }
        /* watermark laid over the zoom controls */
        .mark { position: absolute; right: 13px; top: 3px; font-size: 20px; color: #9a9a9a; text-shadow: 1px 1px 0 #fff; white-space: nowrap; }
      </style>
      <span>就绪</span><span class="acc">${icon('access')}</span><span>辅助功能: 不可用</span>
      <div class="views">
        <button class="on" aria-label="普通">${icon('viewGrid')}</button><button aria-label="页面布局">${icon('viewPage')}</button><button aria-label="分页预览">${icon('viewBreak')}</button>
      </div>
      <div class="zoom"><button class="step">−</button><input type="range" aria-label="缩放" min="0" max="100" value="50"><button class="step">+</button></div>
      <span class="pct">100%</span>
      <span class="mark">CSDN @工控老马</span>`;
  }
}
customElements.define('status-bar', StatusBar);

// Level meter docked on the left screen edge
class SideMeter extends HTMLElement {
  connectedCallback() {
    this.attachShadow({ mode: 'open' }).innerHTML = `
      <style>
        :host { display: block; box-sizing: border-box; width: 17px; height: 90px; padding: 10px 6px 9px 3px; background: #4b4e60;
          border: solid #33364a; border-width: 1px 1px 1px 0; border-radius: 0 6px 6px 0; }
        div { height: 100%; background:
          repeating-linear-gradient(#4b4e60 0 1px, transparent 1px 3px),
          linear-gradient(#2d2f3d 56%, #a8c95a 56%, #6fc48a 75%, #4cc0b0); }
      </style><div></div>`;
  }
}
customElements.define('side-meter', SideMeter);

class ExcelApp extends HTMLElement {
  connectedCallback() {
    this.attachShadow({ mode: 'open' }).innerHTML = `
      <style>
        :host { display: flex; flex-direction: column; height: 100vh; }
        main { flex: 1; display: flex; min-height: 0; position: relative; }
        sheet-grid { flex: 1; min-width: 0; }
        .side { display: flex; padding: 1px 3px 0 2px; }
        side-meter { position: absolute; left: 0; top: 459px; }
      </style>
      <title-bar></title-bar>
      <ribbon-bar></ribbon-bar>
      <quick-bar></quick-bar>
      <formula-bar></formula-bar>
      <main><sheet-grid></sheet-grid><div class="side"><scroll-strip vertical></scroll-strip></div><side-meter></side-meter></main>
      <sheet-tabs></sheet-tabs>
      <status-bar></status-bar>`;
  }
}
customElements.define('excel-app', ExcelApp);
</script>
</body>
</html>
